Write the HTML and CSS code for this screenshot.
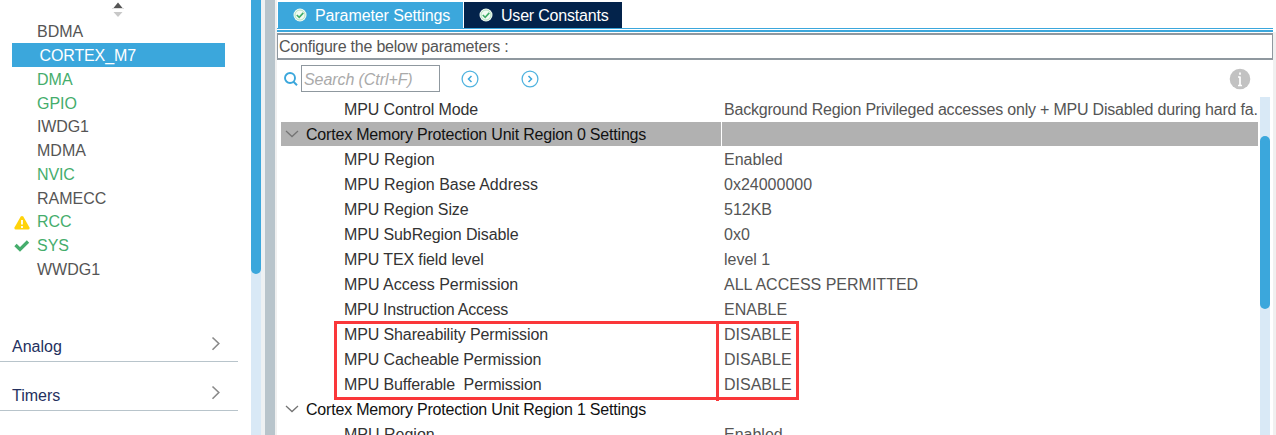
FILE: index.html
```html
<!DOCTYPE html>
<html lang="en">
<head>
<meta charset="utf-8">
<title>CORTEX_M7 configuration</title>
<link rel="stylesheet" href="styles.css">
</head>
<body>
<div class="app">
  <aside class="sidebar">
    <div class="sort"><svg width="12" height="16" viewBox="0 0 12 16"><path d="M6 1.500L10.500 7H1.500Z" fill="#555"/><path d="M0 7.500h12" stroke="#ddd"/><path d="M1.500 11H10.500L6 16Z" fill="#c8c8c8"/></svg></div>
    <ul class="modules">
      <li class="module"><span class="mark"></span><span>BDMA</span></li>
      <li class="module selected"><span>CORTEX_M7</span></li>
      <li class="module on"><span class="mark"></span><span>DMA</span></li>
      <li class="module on"><span class="mark"></span><span>GPIO</span></li>
      <li class="module"><span class="mark"></span><span class="snug">IWDG1</span></li>
      <li class="module"><span class="mark"></span><span>MDMA</span></li>
      <li class="module on"><span class="mark"></span><span class="snug">NVIC</span></li>
      <li class="module"><span class="mark"></span><span>RAMECC</span></li>
      <li class="module on"><span class="mark"><svg width="16" height="15" viewBox="0 0 16 15"><path d="M6.700 1.500Q8 .3 9.300 1.500L15.500 12.500Q16 14.500 14.500 14.500H1.500Q0 14.500 .5 12.500Z" fill="#ffd30a"/><path d="M8 5v4.500M8 11v2" stroke="#fff" stroke-width="1.800"/></svg></span><span>RCC</span></li>
      <li class="module on"><span class="mark"><svg width="16" height="15" viewBox="0 0 16 15"><path d="M1.500 6L6 10.500L14 2.500" fill="none" stroke="#45ad6c" stroke-width="3.300"/></svg></span><span>SYS</span></li>
      <li class="module"><span class="mark"></span><span>WWDG1</span></li>
    </ul>
    <div class="category first"><span>Analog</span><svg width="10" height="16" viewBox="0 0 10 16"><path d="M1.500 1.500L7.800 7.500L1.500 13.800" fill="none" stroke="#8a8a8a" stroke-width="1.600"/></svg></div>
    <div class="category"><span>Timers</span><svg width="10" height="16" viewBox="0 0 10 16"><path d="M1.500 1.500L7.800 7.500L1.500 13.800" fill="none" stroke="#8a8a8a" stroke-width="1.600"/></svg></div>
  </aside>
  <div class="side-track"><div class="side-thumb"></div></div>
  <div class="gutter"></div>
  <div class="splitter"></div>
  <main class="main">
    <nav class="tabs">
      <div class="tab active"><svg width="14" height="14" viewBox="0 0 14 14"><circle cx="7" cy="7" r="6.500" fill="#f1fbf2"/><circle cx="7" cy="7" r="5" fill="none" stroke="#a5d9b6" stroke-width=".8"/><path d="M3.800 7L6.200 9.300L10.300 4.900" fill="none" stroke="#3fac68" stroke-width="1.600"/></svg><span>Parameter Settings</span></div>
      <div class="tab user"><svg width="14" height="14" viewBox="0 0 14 14"><circle cx="7" cy="7" r="6.500" fill="#f1fbf2"/><circle cx="7" cy="7" r="5" fill="none" stroke="#a5d9b6" stroke-width=".8"/><path d="M3.800 7L6.200 9.300L10.300 4.900" fill="none" stroke="#3fac68" stroke-width="1.600"/></svg><span>User Constants</span></div>
    </nav>
    <div class="rule"></div>
    <div class="heading"><span>Configure the below parameters :</span></div>
    <div class="toolbar">
      <svg class="magnifier" width="16" height="16" viewBox="0 0 16 16"><circle cx="7" cy="7" r="5" fill="none" stroke="#3ba7dc" stroke-width="1.900"/><path d="M10.500 10.800L14 14.200" stroke="#3ba7dc" stroke-width="2"/></svg>
      <div class="search"><span>Search (Ctrl+F)</span></div>
      <svg class="prev" width="18" height="18" viewBox="0 0 18 18"><circle cx="9" cy="9" r="7.900" fill="none" stroke="#50b3df" stroke-width="1.300"/><path d="M10.500 6L7.500 9L10.500 12" fill="none" stroke="#3ba7dc" stroke-width="1.500"/></svg>
      <svg class="next" width="18" height="18" viewBox="0 0 18 18"><circle cx="9" cy="9" r="7.900" fill="none" stroke="#50b3df" stroke-width="1.300"/><path d="M7.500 6L10.500 9L7.500 12" fill="none" stroke="#3ba7dc" stroke-width="1.500"/></svg>
      <svg class="info" width="22" height="22" viewBox="0 0 22 22"><circle cx="11" cy="11" r="10.300" fill="#c2c2c2"/><path d="M11 4.500v2.300M11 8.500V18M9 9h2M9 17.500h4" stroke="#fff" stroke-width="1.700"/></svg>
    </div>
    <div class="content">
      <div class="table">
        <div class="row"><span class="key snug">MPU Control Mode</span><span class="value long">Background Region Privileged accesses only + MPU Disabled during hard fa.</span></div>
        <div class="row group current"><span class="key"><svg width="14" height="10" viewBox="0 0 14 10"><path d="M1 2L7 7.500L13 2" fill="none" stroke="#747474" stroke-width="1.300"/></svg><span class="title">Cortex Memory Protection Unit Region 0 Settings</span></span><span class="value"></span></div>
        <div class="row"><span class="key">MPU Region</span><span class="value">Enabled</span></div>
        <div class="row"><span class="key">MPU Region Base Address</span><span class="value">0x24000000</span></div>
        <div class="row"><span class="key snug">MPU Region Size</span><span class="value">512KB</span></div>
        <div class="row"><span class="key snug">MPU SubRegion Disable</span><span class="value">0x0</span></div>
        <div class="row"><span class="key snug">MPU TEX field level</span><span class="value">level 1</span></div>
        <div class="row"><span class="key">MPU Access Permission</span><span class="value">ALL ACCESS PERMITTED</span></div>
        <div class="row"><span class="key tight">MPU Instruction Access</span><span class="value">ENABLE</span></div>
        <div class="row"><span class="key snug">MPU Shareability Permission</span><span class="value">DISABLE</span></div>
        <div class="row"><span class="key snug">MPU Cacheable Permission</span><span class="value">DISABLE</span></div>
        <div class="row"><span class="key snug">MPU Bufferable&nbsp; Permission</span><span class="value">DISABLE</span></div>
        <div class="row group"><span class="key"><svg width="14" height="10" viewBox="0 0 14 10"><path d="M1 2L7 7.500L13 2" fill="none" stroke="#747474" stroke-width="1.300"/></svg><span class="title">Cortex Memory Protection Unit Region 1 Settings</span></span><span class="value"></span></div>
        <div class="row"><span class="key">MPU Region</span><span class="value">Enabled</span></div>
        <div class="highlight"><div class="highlight-divider"></div></div>
      </div>
      <div class="track"><div class="thumb"></div></div>
    </div>
  </main>
  <div class="edge"></div>
</div>
</body>
</html>
```
FILE: styles.css
```css
* { box-sizing: border-box; }
body { margin: 0; background: #fff; font: 16px/24px "Liberation Sans", Arial, sans-serif; color: #555; overflow: hidden; }
svg { display: block; flex: none; }
span { white-space: pre; }
.app { display: flex; width: 1276px; height: 435px; overflow: hidden; }
.snug { letter-spacing: -.12px; }
.tight { letter-spacing: -.22px; }

.sidebar { width: 251px; flex: none; }
.sort { height: 19px; padding: 1px 0 0 112px; }
.modules { list-style: none; margin: 0; padding: 0; }
.module { height: 23.8px; display: flex; align-items: center; padding: 2px 0 0 14px; }
.module.on { color: #45ad6c; }
.module.selected { height: 24px; margin: 0 26px 0 12px; padding-left: 27.5px; background: #3ba7dc; color: #fff; letter-spacing: -.12px; }
.mark { width: 23px; flex: none; }
.category { height: 49px; width: 238px; padding: 19px 17px 0 12px; display: flex; justify-content: space-between; border-bottom: 1px solid #b8c4cb; color: #24305e; }
.category span { line-height: 30px; }
.category svg { margin-top: 4px; }
.category.first { margin-top: 32px; }

.side-track { width: 10px; flex: none; background: #d9e9f6; }
.side-thumb { height: 274px; background: #3ba7dc; border-radius: 0 0 5px 5px; }
.gutter { width: 4px; flex: none; background: #eef1f3; }
.splitter { width: 10px; flex: none; background: #b8c4cb; }

.main { width: 998px; flex: none; border-left: 2px solid #f0f0f0; }
.tabs { display: flex; gap: 1px; height: 28px; padding: 2px 0 0 1px; }
.tab { display: flex; align-items: center; gap: 8px; padding-left: 15px; width: 185px; background: #3ba7dc; color: #fff; letter-spacing: -.1px; }
.tab span { padding-top: 2px; }
.tab.user { width: 158px; background: #03234b; letter-spacing: -.2px; }
.rule { height: 4px; border-top: 1px solid #3ba7dc; border-bottom: 2px solid #3ba7dc; }
.heading { height: 27px; margin-top: 1px; border: solid #8f989f; border-width: 2px 1px; padding: 0 1px; line-height: 24px; letter-spacing: -.22px; }
.toolbar { height: 37px; padding: 5px 22px 0 6px; display: flex; }
.magnifier { margin-top: 6px; }
.search { width: 139px; height: 27px; margin-left: 2px; padding-left: 2px; border: 1px solid #8f989f; color: #aaa; font-style: italic; line-height: 27px; letter-spacing: -.08px; }
.prev { margin: 5px 0 0 21px; }
.next { margin: 5px 0 0 42px; }
.info { margin: 3px 0 0 auto; }

.content { height: 338px; padding: 0 3px 0 4px; display: flex; justify-content: space-between; }
.table { position: relative; width: 977px; }
.row { display: grid; grid-template: 24px / 440px 536px; column-gap: 1px; height: 25px; }
.key { padding-left: 63px; color: #333; line-height: 25px; }
.value { padding-left: 2px; line-height: 25px; }
.long { letter-spacing: -.2px; }
.group .key { display: flex; align-items: center; gap: 7px; padding-left: 4px; color: #111; }
.group .title { letter-spacing: -.2px; }
.current .key, .current .value { background: #b1b1b1; }
.highlight { position: absolute; left: 53px; top: 224px; width: 465px; height: 79px; border: 3px solid #fa373a; }
.highlight-divider { width: 3px; height: 77px; margin-left: 379px; background: #fa373a; }
.track { width: 10px; padding-top: 39px; background: #d9e9f6; }
.thumb { height: 173px; border-radius: 5px; background: #3ba7dc; }
.edge { flex: 1; margin-top: 32px; background: #f0f0f0; }
```
